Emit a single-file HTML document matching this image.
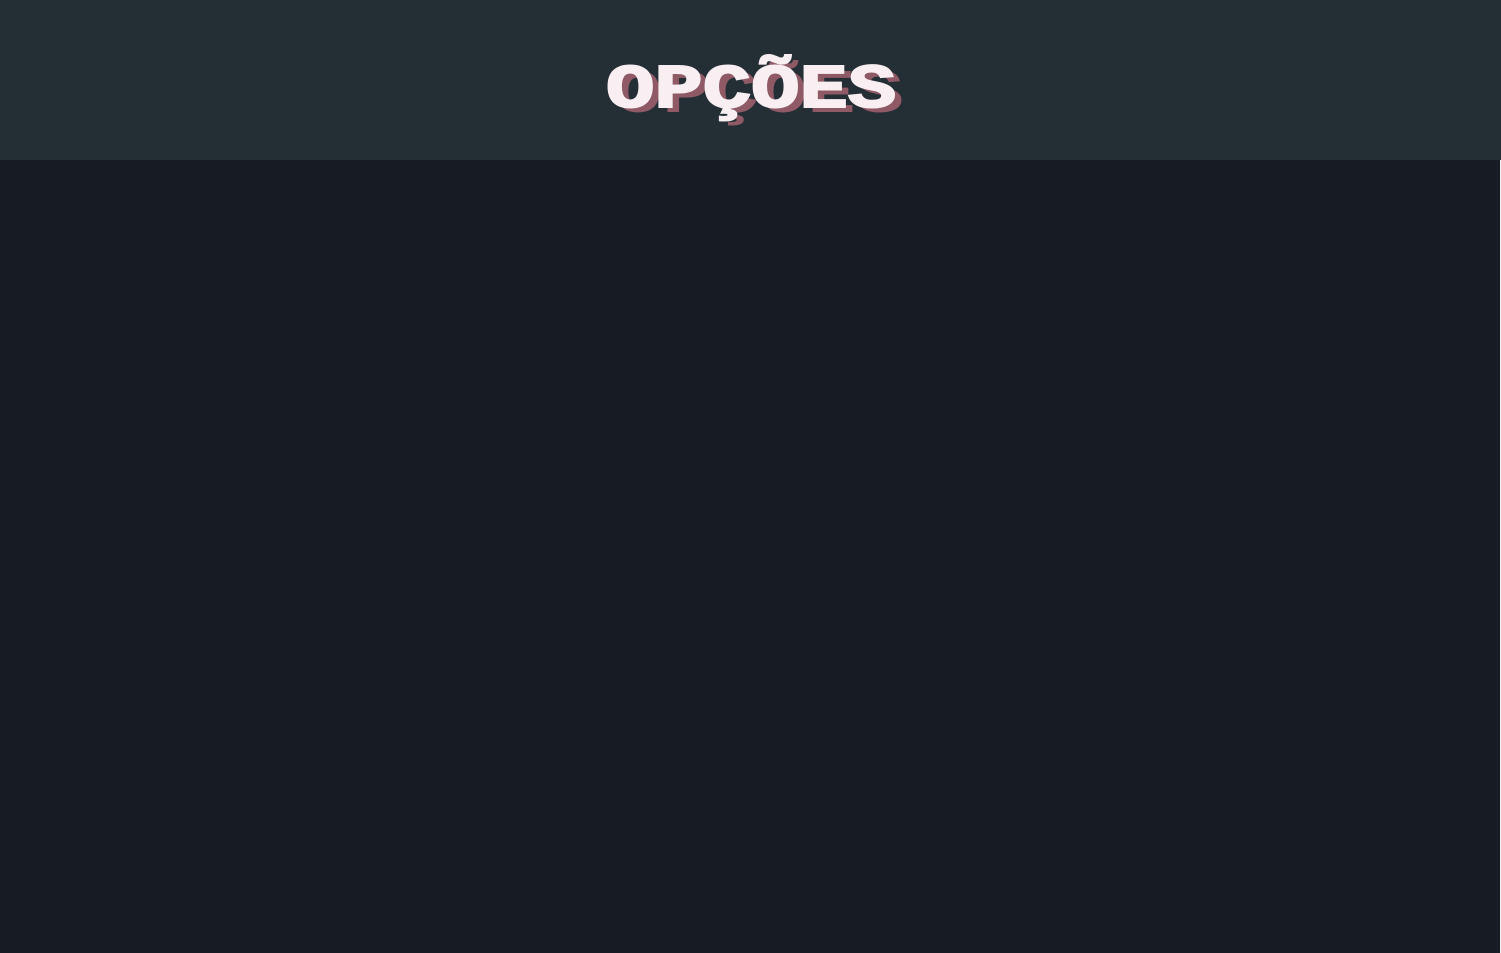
<!DOCTYPE html>
<html><head><style>
html,body{margin:0;padding:0;width:1501px;height:953px;overflow:hidden;background:#171b23;}
.hdr{position:absolute;left:0;top:0;width:1501px;height:160px;background:#242e35;}
.edge{position:absolute;left:1500px;top:160px;width:1px;height:793px;background:#f4f4f4;}
.t{position:absolute;left:606px;top:56px;transform-origin:0 0;transform:scaleX(1.3);font-family:"Liberation Mono",monospace;font-weight:bold;font-size:62px;line-height:70px;color:#f9eff2;-webkit-text-stroke:2px #f9eff2;letter-spacing:0;text-shadow:6px 5px 0 #8f5a66;white-space:nowrap;}
</style></head><body>
<div class="hdr"></div>
<div class="edge"></div>
<div class="t">OPÇÕES</div>
</body></html>
